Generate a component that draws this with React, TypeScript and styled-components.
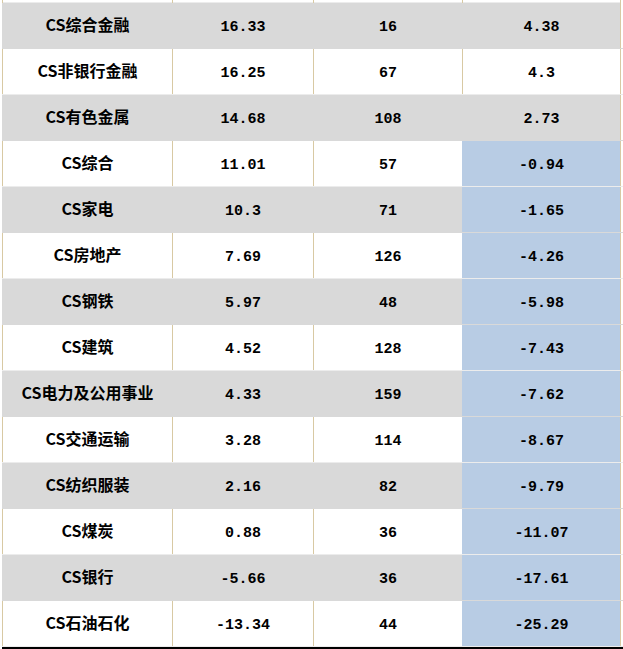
import React from "react";
import styled, { createGlobalStyle } from "styled-components";

const GlobalStyle = createGlobalStyle`
  html, body {
    margin: 0;
    padding: 0;
    background: #ffffff;
  }
`;

const Sheet = styled.div`
  width: 623px;
  height: 649px;
  overflow: hidden;
  padding-left: 2px;
  box-sizing: border-box;
  font-weight: bold;
  color: #000;
`;

const COLS = "170px 141px 149px 158px 3px";

const Row = styled.div<{ $shade: boolean; $h?: number }>`
  display: grid;
  grid-template-columns: ${COLS};
  height: ${(p) => (p.$h ? p.$h : 46)}px;
  background: ${(p) => (p.$shade ? "#d9d9d9" : "#ffffff")};
  box-sizing: border-box;
  border-bottom: 1px solid ${(p) => (p.$shade ? "#d9d9d9" : "#ececec")};
`;

const Cell = styled.div<{ $shade: boolean; $blue?: boolean; $name?: boolean }>`
  display: flex;
  align-items: center;
  justify-content: center;
  box-sizing: border-box;
  line-height: 1;
  font-family: ${(p) =>
    p.$name
      ? '"Noto Sans CJK SC", "Liberation Sans", sans-serif'
      : '"Liberation Mono", monospace'};
  font-size: ${(p) => (p.$name ? "16px" : "15px")};
  padding-top: ${(p) => (p.$name ? "0" : "3px")};
  padding-bottom: ${(p) => (p.$name ? "3px" : "0")};
  background: ${(p) => (p.$blue ? "#b8cce4" : "transparent")};
  border-left: 1px solid ${(p) => (p.$shade || p.$blue ? "transparent" : "#d8c9a3")};
  white-space: nowrap;
`;

const Edge = styled.div`
  background: #ffffff;
  border-left: 1px solid #d8c9a3;
`;

const BottomLine = styled.div`
  height: 2px;
  width: 621px;
  background: #000;
`;

type Item = { name: string; a: string; b: string; c: string };

const data: Item[] = [
  { name: "CS综合金融", a: "16.33", b: "16", c: "4.38" },
  { name: "CS非银行金融", a: "16.25", b: "67", c: "4.3" },
  { name: "CS有色金属", a: "14.68", b: "108", c: "2.73" },
  { name: "CS综合", a: "11.01", b: "57", c: "-0.94" },
  { name: "CS家电", a: "10.3", b: "71", c: "-1.65" },
  { name: "CS房地产", a: "7.69", b: "126", c: "-4.26" },
  { name: "CS钢铁", a: "5.97", b: "48", c: "-5.98" },
  { name: "CS建筑", a: "4.52", b: "128", c: "-7.43" },
  { name: "CS电力及公用事业", a: "4.33", b: "159", c: "-7.62" },
  { name: "CS交通运输", a: "3.28", b: "114", c: "-8.67" },
  { name: "CS纺织服装", a: "2.16", b: "82", c: "-9.79" },
  { name: "CS煤炭", a: "0.88", b: "36", c: "-11.07" },
  { name: "CS银行", a: "-5.66", b: "36", c: "-17.61" },
  { name: "CS石油石化", a: "-13.34", b: "44", c: "-25.29" },
];

export default function App() {
  return (
    <>
      <GlobalStyle />
      <Sheet>
        <Row $shade={false} $h={3}>
          <Cell $shade={false} />
          <Cell $shade={false} />
          <Cell $shade={false} />
          <Cell $shade={false} />
          <Edge />
        </Row>
        {data.map((d, i) => {
          const shade = i % 2 === 0;
          const blue = d.c.startsWith("-");
          return (
            <Row key={d.name} $shade={shade}>
              <Cell $shade={shade} $name>
                {d.name}
              </Cell>
              <Cell $shade={shade}>{d.a}</Cell>
              <Cell $shade={shade}>{d.b}</Cell>
              <Cell $shade={shade} $blue={blue}>
                {d.c}
              </Cell>
              <Edge />
            </Row>
          );
        })}
        <BottomLine />
      </Sheet>
    </>
  );
}
